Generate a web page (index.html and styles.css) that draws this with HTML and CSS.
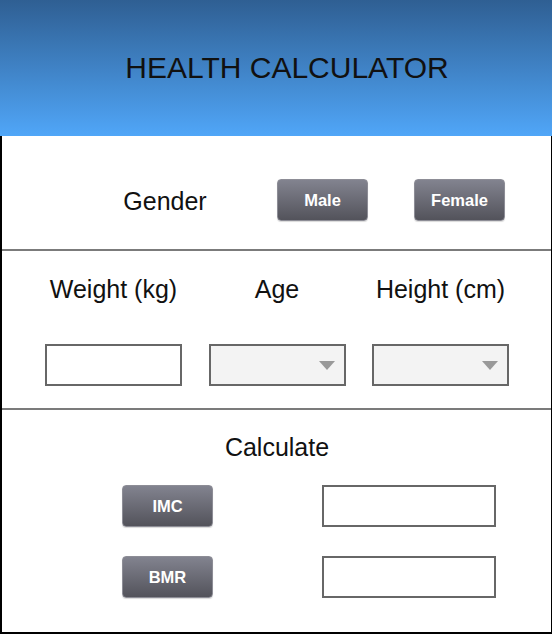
FILE: index.html
```html
<!DOCTYPE html>
<html lang="en">
<head>
<meta charset="utf-8">
<title>Health Calculator</title>
<link rel="stylesheet" href="styles.css">
</head>
<body>
<div class="app">
  <header class="header">
    <h1 class="title">HEALTH CALCULATOR</h1>
  </header>
  <main class="panel">
    <section class="section gender-row">
      <span class="label gender-label">Gender</span>
      <button class="btn btn-male" type="button">Male</button>
      <button class="btn" type="button">Female</button>
    </section>
    <section class="section measures">
      <span class="label">Weight (kg)</span>
      <span class="label">Age</span>
      <span class="label">Height (cm)</span>
      <div class="field"></div>
      <div class="field select"><span class="caret"></span></div>
      <div class="field select"><span class="caret"></span></div>
    </section>
    <section class="section calc">
      <span class="label calc-label">Calculate</span>
      <div class="calc-row">
        <button class="btn" type="button">IMC</button>
        <div class="field result"></div>
      </div>
      <div class="calc-row">
        <button class="btn" type="button">BMR</button>
        <div class="field result"></div>
      </div>
    </section>
  </main>
</div>
</body>
</html>
```

FILE: styles.css
```css
* { box-sizing: border-box; }
html, body { margin: 0; padding: 0; background: #fff; }
body { font-family: "Liberation Sans", Arial, sans-serif; color: #111; }
.app { width: 552px; height: 634px; display: flex; flex-direction: column; }
.header {
  height: 136px;
  background: linear-gradient(#2f5f93, #50a6f8);
  display: flex; align-items: center; justify-content: center;
}
.title { margin: 0; font-weight: normal; font-size: 30px; color: #111; padding-left: 22px; }
.panel {
  flex: 1;
  border-left: 2px solid #000;
  border-right: 1px solid #000;
  border-bottom: 2px solid #000;
  display: flex; flex-direction: column;
}
.section + .section { border-top: 2px solid #7b7b7b; }
.label { font-size: 25px; line-height: 28px; color: #111; }
.gender-row {
  display: flex; align-items: center;
  height: 113px;
  padding: 43px 0 28px 98px;
}
.gender-label { width: 130px; text-align: center; margin-right: 47px; padding-top: 2px; }
.btn-male { margin-right: 46px; }
.btn {
  width: 91px; height: 42px;
  border: 1px solid #8d8d96;
  border-radius: 4px;
  background: linear-gradient(#82838f, #53535b);
  color: #fff;
  font-family: "Liberation Sans", Arial, sans-serif;
  font-weight: bold; font-size: 16.5px;
  padding: 0;
  box-shadow: 0 1px 1px rgba(0,0,0,0.15);
}
.measures {
  height: 159px;
  display: grid;
  grid-template-columns: repeat(3, 137px);
  grid-template-rows: 28px 42px;
  column-gap: 26.5px;
  row-gap: 41px;
  justify-content: start;
  justify-items: center;
  padding: 24px 0 20px 43px;
}
.field {
  width: 137px; height: 42px;
  border: 2px solid #676767;
  background: #fff;
}
.select {
  background: #f3f3f3;
  display: flex; align-items: center; justify-content: flex-end;
  padding-right: 9px;
}
.caret {
  width: 0; height: 0;
  border-left: 8px solid transparent;
  border-right: 8px solid transparent;
  border-top: 9px solid #999;
}
.calc {
  flex: 1;
  display: flex; flex-direction: column;
  padding: 23px 0 0 0;
}
.calc-label { text-align: center; padding-left: 1px; margin-bottom: 24px; }
.calc-row {
  display: flex; align-items: center;
  padding-left: 120px;
  margin-bottom: 29px;
}
.calc-row .btn { margin-right: 109px; }
.result { width: 174px; }
```
